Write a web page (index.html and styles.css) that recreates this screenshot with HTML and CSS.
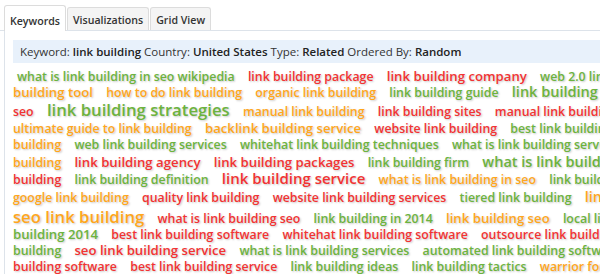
FILE: index.html
```html
<!DOCTYPE html>
<html>
<head>
    <meta charset="UTF-8">
    <title>Keyword Cloud</title>
    <link rel="stylesheet" href="styles.css">
</head>
<body>
    <div class="tabs">
        <span class="tab active">Keywords</span>
        <span class="tab">Visualizations</span>
        <span class="tab">Grid View</span>
    </div>
    <div class="panel">
        <div class="info">
            Keyword: <b>link building</b> Country: <b>United States</b> Type: <b>Related</b> Ordered By: <b>Random</b>
        </div>
        <div class="cloud">
            <div class="row h16 first">
                <span class="g">what is link building in seo wikipedia</span>
                <span class="r">link building package</span>
                <span class="r s2">link building company</span>
                <span class="g">web 2.0 link</span>
            </div>
            <div class="row h16">
                <span class="o s2">building tool</span>
                <span class="o">how to do link building</span>
                <span class="o">organic link building</span>
                <span class="g">link building guide</span>
                <span class="g s3">link building tips</span>
            </div>
            <div class="row h20">
                <span class="r">seo</span>
                <span class="g s5">link building strategies</span>
                <span class="o">manual link building</span>
                <span class="r">link building sites</span>
                <span class="r">manual link building</span>
            </div>
            <div class="row h16">
                <span class="o">ultimate guide to link building</span>
                <span class="o s2">backlink building service</span>
                <span class="r">website link building</span>
                <span class="g">best link building</span>
            </div>
            <div class="row h17">
                <span class="o">building</span>
                <span class="g">web link building services</span>
                <span class="g">whitehat link building techniques</span>
                <span class="g">what is link building services</span>
            </div>
            <div class="row h17">
                <span class="o">building</span>
                <span class="r s2">link building agency</span>
                <span class="r s2">link building packages</span>
                <span class="g">link building firm</span>
                <span class="g s3">what is link building</span>
            </div>
            <div class="row h17">
                <span class="r">building</span>
                <span class="g">link building definition</span>
                <span class="r s4">link building service</span>
                <span class="o">what is link building in seo</span>
                <span class="g">link building</span>
            </div>
            <div class="row h20">
                <span class="o">google link building</span>
                <span class="r">quality link building</span>
                <span class="r">website link building services</span>
                <span class="g">tiered link building</span>
                <span class="o s3">link building</span>
            </div>
            <div class="row h19">
                <span class="o s5">seo link building</span>
                <span class="r">what is link building seo</span>
                <span class="g">link building in 2014</span>
                <span class="o s2">link building seo</span>
                <span class="g">local link building</span>
            </div>
            <div class="row h16">
                <span class="g s2">building 2014</span>
                <span class="r">best link building software</span>
                <span class="r">whitehat link building software</span>
                <span class="r">outsource link building</span>
            </div>
            <div class="row h17">
                <span class="g">building</span>
                <span class="r s2">seo link building service</span>
                <span class="g">what is link building services</span>
                <span class="g">automated link building software</span>
            </div>
            <div class="row h15">
                <span class="r">building software</span>
                <span class="r">best link building service</span>
                <span class="g">link building ideas</span>
                <span class="g">link building tactics</span>
                <span class="o">warrior forum</span>
            </div>
        </div>
    </div>
</body>
</html>
```

FILE: styles.css
```css
html, body {
    overflow: hidden;
}
body {
    margin: 0;
    background-color: white;
    color: #333;
    font-family: "Open Sans", Arial, sans-serif;
}
.tabs {
    display: flex;
    align-items: flex-end;
    padding: 5px 0 0 4px;
    border-bottom: 1px solid #dde3ea;
    height: 31px;
    box-sizing: border-box;
    width: 700px;
}
.tab {
    font-size: 10.6px;
    font-weight: 600;
    color: #333;
    padding: 0 5px;
    height: 22px;
    line-height: 24px;
    background-color: #f4f4f4;
    border: 1px solid #dcdcdc;
    border-bottom: none;
    border-radius: 3px 3px 0 0;
    margin-right: 1px;
}
.tab.active {
    background-color: white;
    height: 25px;
    line-height: 30px;
    margin-bottom: -1px;
}
.panel {
    margin-left: 4px;
    border-left: 1px solid #dde3ea;
    padding: 9px 0 0 8px;
    width: 800px;
}
.info {
    background-color: #e8f1fb;
    height: 23px;
    line-height: 23px;
    font-size: 11.5px;
    padding-left: 7px;
    color: #333;
}
.info b {
    font-weight: 600;
    color: #222;
}
.cloud {
    padding-top: 5px;
}
.row {
    white-space: nowrap;
    font-size: 12.35px;
    font-weight: 600;
}
.row span {
    margin-right: 10px;
    text-shadow: 1px 1px 2px rgba(0, 0, 0, 0.22);
}
.first {
    padding-left: 4px;
}
.h15 { height: 15px; line-height: 15px; }
.h16 { height: 16px; line-height: 16px; }
.h17 { height: 17px; line-height: 17px; }
.h19 { height: 19px; line-height: 19px; }
.h20 { height: 20px; line-height: 20px; }
.g { color: #6cb33e; }
.o { color: #ffa61c; }
.r { color: #f23333; }
.s2 { font-size: 13.2px; }
.s3 { font-size: 14.5px; }
.s4 { font-size: 15px; }
.s5 { font-size: 16.7px; }
```
